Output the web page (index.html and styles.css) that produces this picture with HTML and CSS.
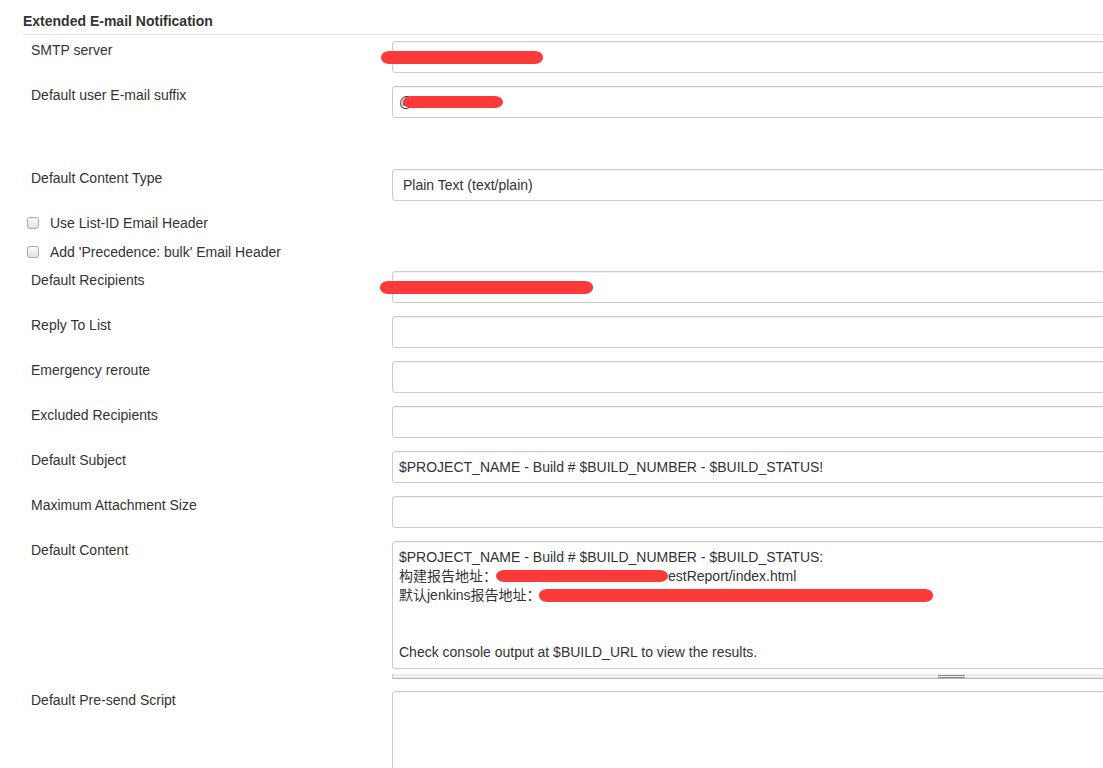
FILE: index.html
```html
<!DOCTYPE html>
<html lang="en">
<head>
  <meta charset="UTF-8" />
  <title>Extended E-mail Notification</title>
  <link rel="stylesheet" href="styles.css">
</head>
<body>
  <div class="section">
    <div class="section-title">Extended E-mail Notification</div>
    <div class="rows">
      <div class="row">
        <div class="label">SMTP server</div>
        <div class="field"><span class="redact smtp"></span></div>
      </div>
      <div class="row row-tall">
        <div class="label">Default user E-mail suffix</div>
        <div class="field"><span class="at">@</span><span class="redact suffix"></span></div>
      </div>
      <div class="row row-select">
        <div class="label">Default Content Type</div>
        <div class="field select">Plain Text (text/plain)</div>
      </div>
      <div class="check-row">
        <span class="checkbox"></span>
        <span>Use List-ID Email Header</span>
      </div>
      <div class="check-row">
        <span class="checkbox"></span>
        <span>Add 'Precedence: bulk' Email Header</span>
      </div>
      <div class="row">
        <div class="label">Default Recipients</div>
        <div class="field"><span class="redact recipients"></span></div>
      </div>
      <div class="row">
        <div class="label">Reply To List</div>
        <input class="field" type="text" value="">
      </div>
      <div class="row">
        <div class="label">Emergency reroute</div>
        <input class="field" type="text" value="">
      </div>
      <div class="row">
        <div class="label">Excluded Recipients</div>
        <input class="field" type="text" value="">
      </div>
      <div class="row">
        <div class="label">Default Subject</div>
        <input class="field" type="text" value="$PROJECT_NAME - Build # $BUILD_NUMBER - $BUILD_STATUS!">
      </div>
      <div class="row">
        <div class="label">Maximum Attachment Size</div>
        <input class="field" type="text" value="">
      </div>
      <div class="row row-area">
        <div class="label">Default Content</div>
        <div class="area-wrap">
          <div class="textarea">
            <div class="line">$PROJECT_NAME - Build # $BUILD_NUMBER - $BUILD_STATUS:</div>
            <div class="line">构建报告地址：<span class="redact url1"></span>estReport/index.html</div>
            <div class="line">默认jenkins报告地址：<span class="redact url2"></span></div>
            <div class="line"></div>
            <div class="line"></div>
            <div class="line">Check console output at $BUILD_URL to view the results.</div>
          </div>
          <div class="resize-bar"><span class="grip"></span></div>
        </div>
      </div>
      <div class="row">
        <div class="label">Default Pre-send Script</div>
        <div class="textarea empty"></div>
      </div>
    </div>
  </div>
</body>
</html>
```

FILE: styles.css
```css
html, body {
  margin: 0;
  overflow: hidden;
  background: #fff;
}
body {
  color: #333;
  font-family: "Liberation Sans", Arial, "Noto Sans CJK SC", sans-serif;
  font-size: 14px;
}
.section {
  margin-left: 23px;
}
.section-title {
  font-weight: bold;
  line-height: 20px;
  padding: 11px 0 3px;
  border-bottom: 1px solid #e2e2e2;
}
.rows {
  padding: 6px 0 0 8px;
}
.row {
  display: flex;
  align-items: flex-start;
  margin-bottom: 13px;
}
.row-tall { margin-bottom: 51px; }
.row-select { margin-bottom: 12px; }
.row-area { margin-bottom: 12px; }
.label {
  width: 361px;
  flex: none;
  line-height: 18px;
}
.field {
  box-sizing: border-box;
  width: 1118px;
  flex: none;
  height: 32px;
  margin: 0;
  padding: 0 6px;
  display: flex;
  align-items: center;
  border: 1px solid #ccc;
  border-radius: 3px;
  box-shadow: inset 0 1px 1px rgba(0, 0, 0, 0.06);
  background: #fff;
  color: #333;
  font: inherit;
  outline: none;
}
.select { padding-left: 10px; }
.redact {
  display: inline-block;
  background: #fc3a3a;
  border-radius: 8px / 6px;
}
.smtp { width: 162px; height: 13px; margin-left: -18px; }
.at { color: #333; }
.suffix { width: 100px; height: 12px; margin-left: -10px; }
.recipients { width: 213px; height: 13px; margin-left: -19px; }
.url1 { width: 172px; height: 12px; vertical-align: -1px; margin-left: -1px; }
.url2 { width: 394px; height: 13px; vertical-align: -2px; margin-left: -2px; }
.check-row {
  display: flex;
  align-items: center;
  height: 20px;
  margin: 0 0 9px -4px;
}
.checkbox {
  box-sizing: border-box;
  width: 12px;
  height: 12px;
  margin-right: 11px;
  border: 1px solid #a9a9a9;
  border-radius: 3px;
  background: linear-gradient(#fdfdfd, #e2e2e2);
}
.area-wrap {
  width: 1118px;
  flex: none;
}
.textarea {
  box-sizing: border-box;
  width: 1118px;
  flex: none;
  padding: 6px 6px;
  border: 1px solid #ccc;
  border-radius: 3px;
  box-shadow: inset 0 1px 1px rgba(0, 0, 0, 0.06);
  line-height: 19px;
}
.line { height: 19px; white-space: nowrap; }
.textarea.empty { height: 130px; }
.resize-bar {
  box-sizing: border-box;
  margin-top: 5px;
  height: 5px;
  background: #eee;
  border-left: 1px solid #ccc;
  border-bottom: 1px solid #b8b8b8;
  display: flex;
  justify-content: center;
  align-items: flex-start;
}
.grip {
  width: 27px;
  height: 1px;
  margin-top: 1px;
  border-top: 1px solid #8a8a8a;
  border-bottom: 1px solid #8a8a8a;
}
```
